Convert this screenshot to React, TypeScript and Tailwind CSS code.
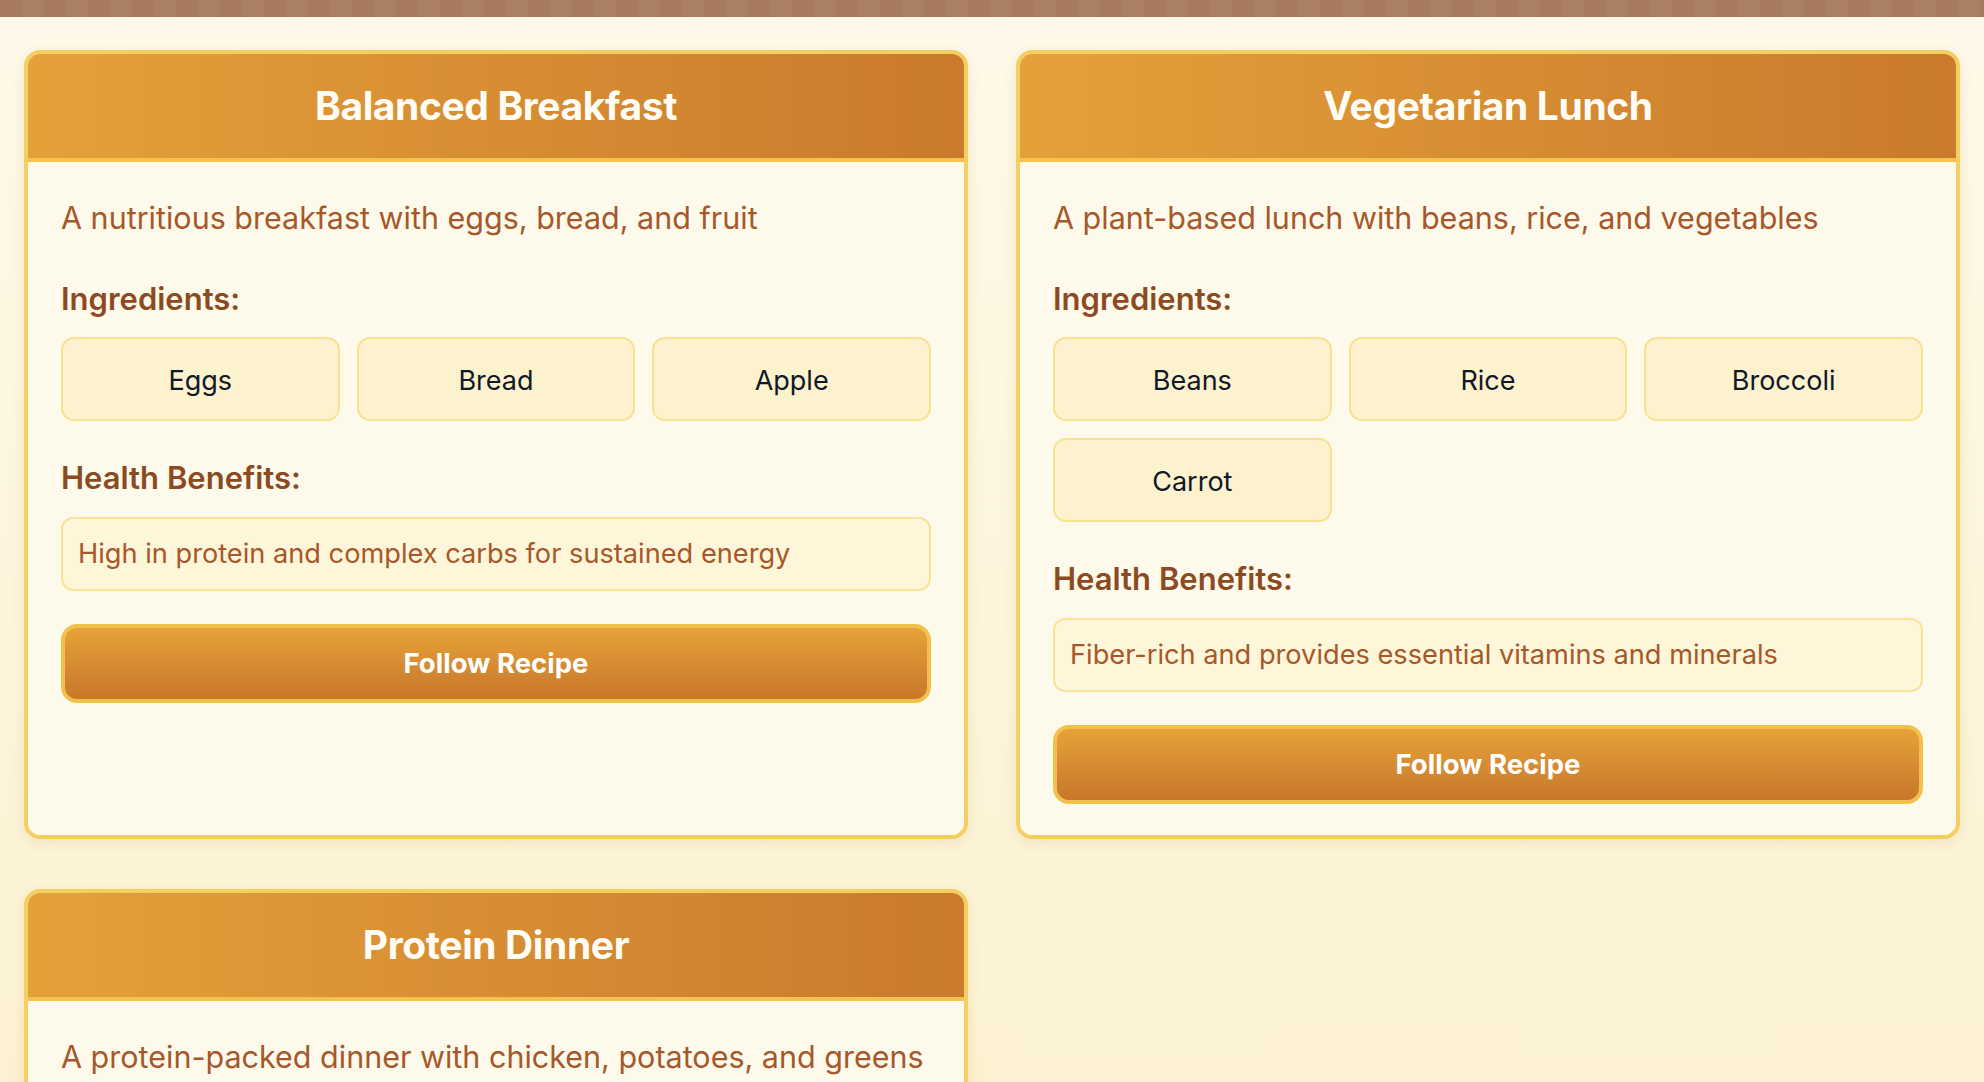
import React from "react";

interface Meal {
  id: string;
  title: string;
  description: string;
  ingredients: string[];
  benefits: string;
}

const meals: Meal[] = [
  {
    id: "breakfast",
    title: "Balanced Breakfast",
    description: "A nutritious breakfast with eggs, bread, and fruit",
    ingredients: ["Eggs", "Bread", "Apple"],
    benefits: "High in protein and complex carbs for sustained energy",
  },
  {
    id: "lunch",
    title: "Vegetarian Lunch",
    description: "A plant-based lunch with beans, rice, and vegetables",
    ingredients: ["Beans", "Rice", "Broccoli", "Carrot"],
    benefits: "Fiber-rich and provides essential vitamins and minerals",
  },
  {
    id: "dinner",
    title: "Protein Dinner",
    description: "A protein-packed dinner with chicken, potatoes, and greens",
    ingredients: ["Chicken", "Potatoes", "Spinach"],
    benefits: "Lean protein and nutrients to support muscle recovery",
  },
];

function MealCard({ meal }: { meal: Meal }) {
  return (
    <div className="flex flex-col rounded-[16px] border-4 border-[#f3cf5f] bg-[#fefaeb] overflow-hidden shadow-[0_4px_14px_rgba(170,120,40,0.14)]">
      {/* header */}
      <div className="h-[108px] flex items-center justify-center border-b-4 border-[#f2c44e] bg-gradient-to-r from-[#e4a13a] to-[#c97a2c]">
        <h2 className="text-[39px] font-bold text-[#fffdf5] tracking-[-0.01em]">{meal.title}</h2>
      </div>

      <div className="px-[33px] pt-[33px] pb-[31px]">
        <p className="text-[30.5px] leading-[46px] text-[#a6582a]">{meal.description}</p>

        <h3 className="mt-[35px] mb-[16px] text-[31px] leading-[45px] font-semibold text-[#8b4a1f]">Ingredients:</h3>
        <div className="grid grid-cols-3 gap-[17px]">
          {meal.ingredients.map((item) => (
            <div
              key={item}
              className="h-[84px] flex items-center justify-center pt-[5px] rounded-[13px] border-2 border-[#f8e18f] bg-[#fcf2cd] text-[27px] text-[#111827]"
            >
              {item}
            </div>
          ))}
        </div>

        <h3 className="mt-[34px] mb-[17px] text-[31px] leading-[45px] font-semibold text-[#8b4a1f]">Health Benefits:</h3>
        <div className="h-[74px] flex items-center px-[15px] rounded-[12px] border-2 border-[#f8e39a] bg-[#fdf6d9] text-[27.2px] text-[#a6582a]">
          {meal.benefits}
        </div>

        <button className="mt-[33px] w-full h-[79px] rounded-[16px] border-4 border-[#f1c14b] bg-gradient-to-b from-[#e6a23a] to-[#c8772b] text-[27.5px] font-bold text-white">
          Follow Recipe
        </button>
      </div>
    </div>
  );
}

export default function App() {
  return (
    <div
      className="min-h-screen bg-gradient-to-b from-[#fef9e9] to-[#fbefc6]"
      style={{ fontFamily: "Inter, 'Noto Sans', sans-serif" }}
    >
      <div className="h-[17px] bg-[repeating-linear-gradient(90deg,#a77a5f_0px,#a77a5f_22px,#ab7f64_22px,#ab7f64_44px)]" />
      <main className="px-[24px] pt-[33px] pb-[48px]">
        <div className="grid grid-cols-2 gap-x-[48px] gap-y-[50px]">
          {meals.map((meal) => (
            <MealCard key={meal.id} meal={meal} />
          ))}
        </div>
      </main>
    </div>
  );
}
